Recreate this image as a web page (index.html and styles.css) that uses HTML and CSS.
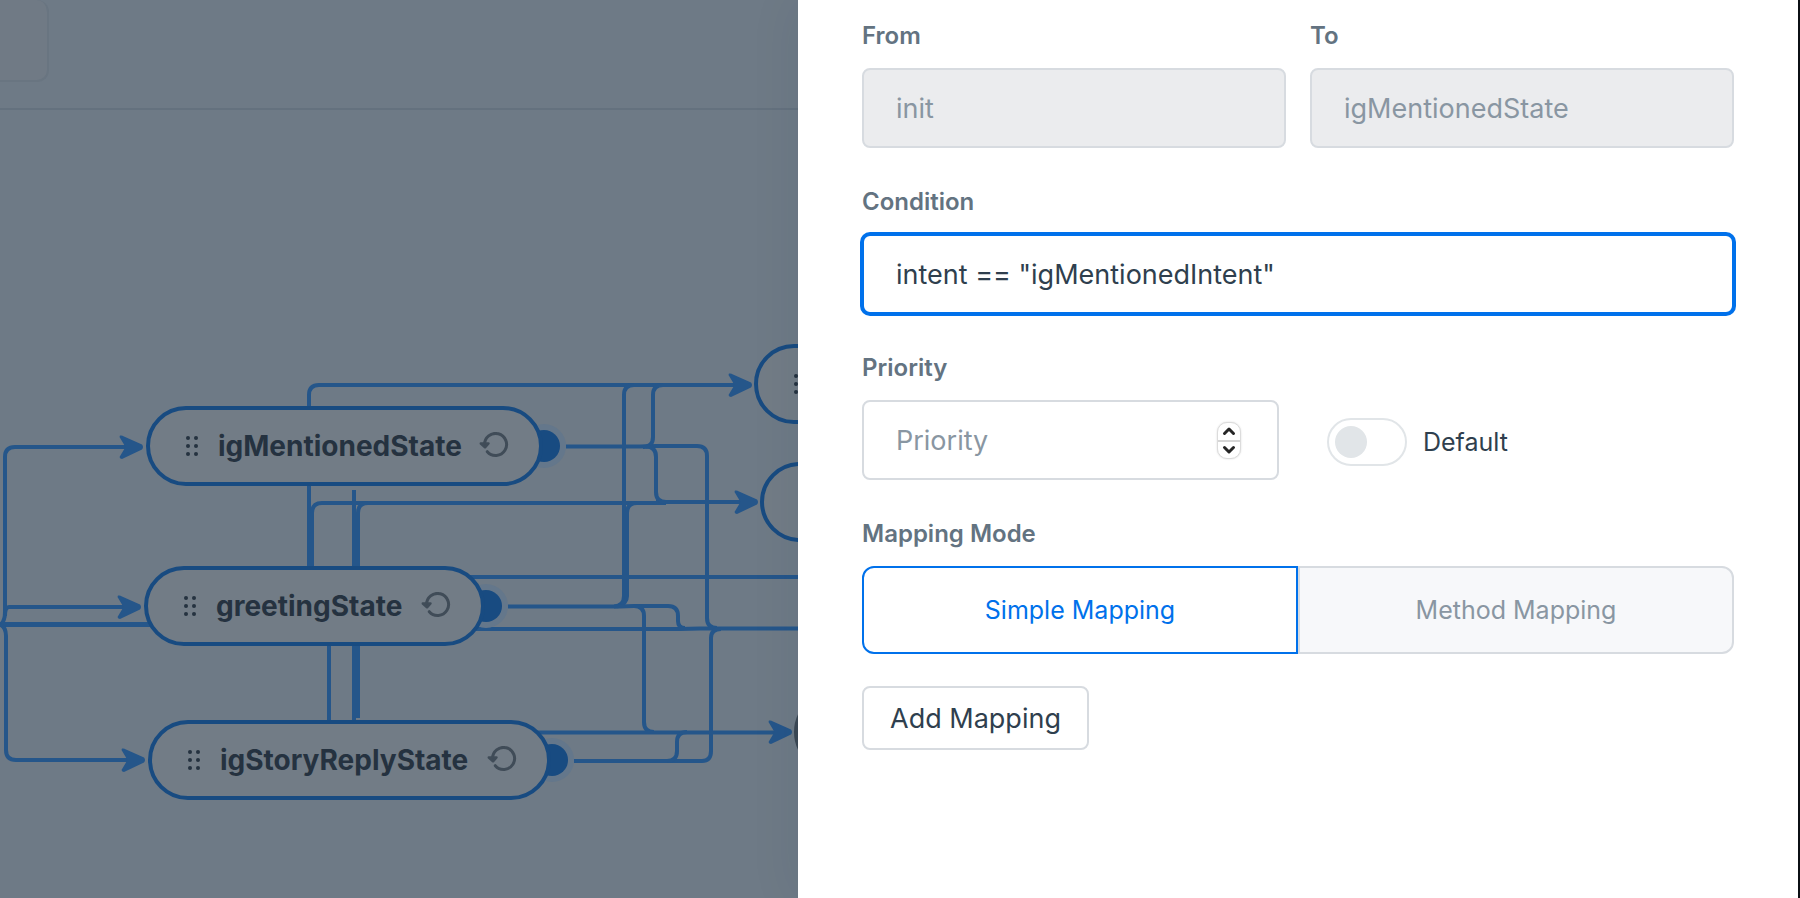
FILE: index.html
```html
<!DOCTYPE html>
<html lang="en">
<head>
<meta charset="utf-8">
<meta name="viewport" content="width=device-width, initial-scale=1">
<title>Edit transition</title>
<link rel="stylesheet" href="styles.css">
</head>
<body>
<div class="layout">
  <main class="stage">
    <header class="topbar"><div class="topbar-box"></div></header>
    <div class="canvas">
      <svg class="edges" width="798" height="898" aria-hidden="true">
        <g class="edge">
          <path d="M0 624.5Q5 622 5 612V457Q5 447 15 447H135"/>
          <path d="M5 616Q5 607 9 607H133"/>
          <path d="M0 624H152M0 625H152"/>
          <path d="M0 624.5Q6 627 6 636V750Q6 760 16 760H137"/>
          <path d="M309 570V395Q309 385 319 385H744"/>
          <path d="M312 570V513Q312 503 322 503H666M656 502H750"/>
          <path d="M354 490V722M358 718V513Q358 503 368 503"/>
          <path d="M329 644V722"/>
          <path d="M566 446.500H640L656 446H697Q707 446 707 456V618Q707 628 717 628"/>
          <path d="M643 447Q653 447 653 437V395Q653 385 663 385"/>
          <path d="M646 446.500Q656 446.500 656 457V492Q656 502 666 502"/>
          <path d="M614 606.500Q624 606 624 596V395Q624 385 634 385"/>
          <path d="M617 606.500Q627 604 627 596V513Q627 503 637 503"/>
          <path d="M508 606.500H620L634 606H668Q678 606 678 616V621Q678 628 685 628"/>
          <path d="M634 606Q644 606 644 616V722Q644 732 654 732"/>
          <path d="M470 577H798M474 629H680L700 628.500H798"/>
          <path d="M536 732.500H784"/>
          <path d="M574 761H702Q711 761 711 751V638Q711 629 721 629"/>
          <path d="M667 761Q677 761 677 751V742Q677 732 687 732"/>
        </g>
        <defs>
          <path id="head" d="M-23-11.500Q-21-12-19-10.500L-1-2.500Q1 0-1 2.500L-21 12Q-23 12-23.500 10L-17.500 0L-23.500-10Z"/>
        </defs>
        <g class="head">
          <use href="#head" x="143" y="447"/><use href="#head" x="141" y="607"/><use href="#head" x="145" y="760"/>
          <use href="#head" x="752" y="385"/><use href="#head" x="758" y="502"/><use href="#head" x="792" y="732"/>
        </g>
        <g class="halo"><circle cx="544" cy="446" r="22"/><circle cx="486" cy="606" r="22"/><circle cx="552" cy="760" r="22"/></g>
        <g class="port"><circle cx="544" cy="446" r="16"/><circle cx="486" cy="606" r="16"/><circle cx="552" cy="760" r="16"/></g>
        <defs>
          <g id="grip"><circle cx="2" cy="2" r="2"/><circle cx="10" cy="2" r="2"/><circle cx="2" cy="10" r="2"/><circle cx="10" cy="10" r="2"/><circle cx="2" cy="18" r="2"/><circle cx="10" cy="18" r="2"/></g>
          <g id="loop"><path d="M8.300 19.700A11 11 0 1 0 5.600 13" fill="none" stroke="currentColor" stroke-width="3" stroke-linecap="round"/><path d="M1.800 11.500L6 15.300L9.500 11.500Z" fill="currentColor" stroke="currentColor" stroke-width="2.500" stroke-linejoin="round"/></g>
        </defs>
      </svg>
      <div class="node" style="left:146px;top:406px;width:397px"><svg class="grip" width="12" height="20"><use href="#grip"/></svg><span>igMentionedState</span><svg class="loop" width="30" height="28"><use href="#loop"/></svg></div>
      <div class="node" style="left:144px;top:566px;width:341px"><svg class="grip" width="12" height="20"><use href="#grip"/></svg><span>greetingState</span><svg class="loop" width="30" height="28"><use href="#loop"/></svg></div>
      <div class="node" style="left:148px;top:720px;width:403px"><svg class="grip" width="12" height="20"><use href="#grip"/></svg><span>igStoryReplyState</span><svg class="loop" width="30" height="28"><use href="#loop"/></svg></div>
      <div class="node" style="left:754px;top:344px;width:300px"><svg class="grip" width="12" height="20"><use href="#grip"/></svg></div>
      <div class="node" style="left:760px;top:462px;width:300px"></div>
      <div class="node node-end" style="left:794px;top:692px;width:300px"></div>
    </div>
  </main>
  <aside class="panel">
    <form class="form">
      <div class="pair">
        <div class="field"><label class="label" for="from">From</label><input class="input" id="from" value="init" disabled></div>
        <div class="field"><label class="label" for="to">To</label><input class="input" id="to" value="igMentionedState" disabled></div>
      </div>
      <div class="field"><label class="label" for="condition">Condition</label><input class="input input-active" id="condition" value='intent == "igMentionedIntent"'></div>
      <div class="priority-row">
        <div class="field">
          <label class="label" for="priority">Priority</label>
          <div class="number">
            <input class="input" id="priority" type="number" placeholder="Priority">
            <div class="stepper">
              <button type="button" class="step" aria-label="Increase"><svg width="14" height="10"><path d="M2.500 7.500L7 3L11.500 7.500"/></svg></button>
              <button type="button" class="step" aria-label="Decrease"><svg width="14" height="10"><path d="M2.500 2.500L7 7L11.500 2.500"/></svg></button>
            </div>
          </div>
        </div>
        <label class="toggle" for="default"><input class="switch" id="default" type="checkbox"><span>Default</span></label>
      </div>
      <div class="field">
        <span class="label" id="mode">Mapping Mode</span>
        <div class="segments" role="group" aria-labelledby="mode">
          <button type="button" class="segment segment-on" aria-pressed="true">Simple Mapping</button>
          <button type="button" class="segment" aria-pressed="false">Method Mapping</button>
        </div>
      </div>
      <button type="button" class="add">Add Mapping</button>
    </form>
  </aside>
</div>
</body>
</html>
```
FILE: styles.css
```css
* { box-sizing: border-box; }
body {
  margin: 0;
  font-family: Inter, "Liberation Sans", sans-serif;
  font-size: 27px;
  color: #2f3f4e;
}
input, button { font: inherit; color: inherit; margin: 0; }

.layout {
  display: grid;
  grid-template-columns: minmax(0, 399fr) minmax(0, 501fr);
  min-height: 100vh;
}

/* Dimmed flow builder */
.stage {
  position: relative;
  overflow: hidden;
  background: #6e7a86;
}
.topbar {
  height: 110px;
  border-bottom: 2px solid #64717e;
}
.topbar-box {
  width: 49px;
  height: 82px;
  border: 2px solid #697581;
  border-width: 0 2px 2px 0;
  border-radius: 0 12px 12px 0;
  background: #707a85;
}
.canvas { position: absolute; inset: 0; }
.edges { position: absolute; left: 0; top: 0; }
.edge { fill: none; stroke: #25568a; stroke-width: 4; }
.head { fill: #25568a; }
.halo { fill: #64778b; }
.port { fill: #184b81; }
.node {
  position: absolute;
  display: flex;
  align-items: center;
  height: 80px;
  padding: 0 30px 0 36px;
  border: 4px solid #184b81;
  border-radius: 40px;
  background: #727c86;
  color: #253240;
  font-size: 28px;
  font-weight: 700;
  white-space: nowrap;
}
.node-end { border-color: #3c4854; }
.grip { flex: none; margin-right: 20px; fill: currentColor; }
.loop { flex: none; margin-left: auto; color: #404c58; }

/* Transition drawer */
.panel {
  position: relative;
  padding: 18px 64px 64px;
  border-right: 2px solid #0b0f14;
  background: #fff;
  box-shadow: 0 0 48px rgba(20, 40, 60, 0.08);
}
.form { display: flex; flex-direction: column; gap: 36px; }
.pair { display: grid; grid-template-columns: 1fr 1fr; gap: 24px; }
.field { display: flex; flex-direction: column; gap: 14px; min-width: 0; }
.label {
  font-size: 24px;
  font-weight: 600;
  line-height: 36px;
  color: #637381;
}
.input {
  width: 100%;
  height: 80px;
  padding: 0 32px;
  border: 2px solid #d7dbe0;
  border-radius: 8px;
  background: #fff;
  outline: none;
}
.input:disabled { background: #ebecee; color: #8996a2; opacity: 1; }
.input::placeholder { color: #8996a2; opacity: 1; }
.input-active { border-color: #0071eb; box-shadow: 0 0 0 2px #0071eb; }

.priority-row {
  display: grid;
  grid-template-columns: 417fr 407fr;
  align-items: end;
  gap: 48px;
}
.number { position: relative; }
.number .input { display: block; appearance: textfield; }
.number .input::-webkit-inner-spin-button { display: none; }
.stepper {
  position: absolute;
  top: 22px;
  right: 38px;
  display: flex;
  flex-direction: column;
  width: 24px;
  height: 37px;
  border: 1px solid #dcdcdc;
  border-radius: 10px;
  background: #fff;
  box-shadow: 0 0 2px rgba(0, 0, 0, 0.15);
}
.step {
  display: flex;
  flex: 1;
  align-items: center;
  justify-content: center;
  padding: 0;
  border: 0;
  background: none;
}
.step + .step { border-top: 2px solid #d6d6d6; }
.step path {
  fill: none;
  stroke: #262626;
  stroke-width: 3;
  stroke-linecap: round;
  stroke-linejoin: round;
}
.toggle {
  display: flex;
  align-items: center;
  gap: 16px;
  height: 76px;
  font-size: 25px;
}
.switch {
  appearance: none;
  width: 80px;
  height: 48px;
  padding: 6px;
  border: 2px solid #e1e5e8;
  border-radius: 24px;
  background: #fff;
}
.switch::before {
  content: "";
  display: block;
  width: 32px;
  height: 32px;
  border-radius: 16px;
  background: #e1e5e8;
}
.switch:checked { border-color: #0071eb; }
.switch:checked::before { margin-left: auto; background: #0071eb; }
.segments { display: grid; grid-template-columns: 1fr 1fr; }
.segment {
  height: 88px;
  padding: 0;
  border: 2px solid #d7dbe0;
  border-radius: 0 12px 12px 0;
  background: #f7f8fa;
  color: #8996a2;
  font-size: 25px;
}
.segment-on {
  border-color: #0071eb;
  border-radius: 12px 0 0 12px;
  background: #fff;
  color: #0071eb;
}
.add {
  align-self: flex-start;
  height: 64px;
  margin-top: -4px;
  padding: 0 26px;
  border: 2px solid #d7dbe0;
  border-radius: 8px;
  background: #fff;
}
```
